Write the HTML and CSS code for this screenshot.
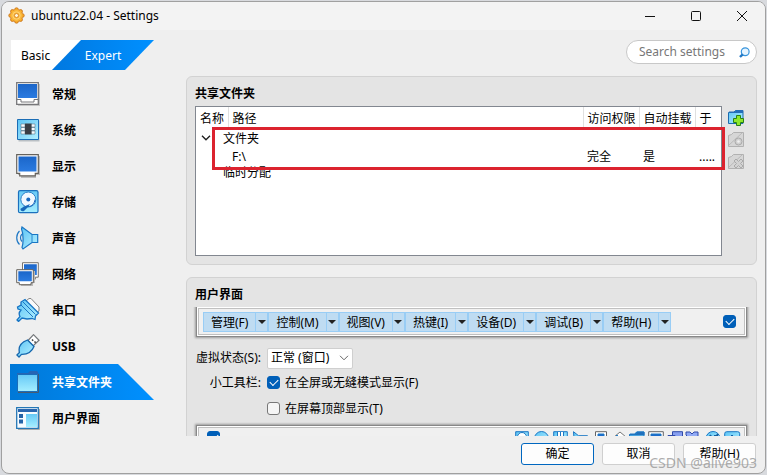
FILE: index.html
```html
<!DOCTYPE html>
<html lang="zh-CN">
<head>
  <meta charset="UTF-8">
  <meta name="viewport" content="width=device-width, initial-scale=1.0">
  <title>ubuntu22.04 - Settings</title>
  <link rel="stylesheet" href="styles.css">
</head>
<body>
  <svg class="defs" width="0" height="0" aria-hidden="true">
    <defs>
      <linearGradient id="screen" x1="0" y1="0" x2="0" y2="1"><stop offset="0" stop-color="#1b66c9"/><stop offset="1" stop-color="#2b7be0"/></linearGradient>
      <linearGradient id="sky" x1="0" y1="0" x2="1" y2="1"><stop offset="0" stop-color="#5cc4f5"/><stop offset="1" stop-color="#b5f0ff"/></linearGradient>
      <linearGradient id="ice" x1="0" y1="0" x2="0" y2="1"><stop offset="0" stop-color="#66c9f6"/><stop offset="1" stop-color="#a5eeff"/></linearGradient>
    </defs>
  </svg>

  <div class="window">
    <header class="titlebar">
      <svg class="gear" width="17" height="17" viewBox="0 0 17 17">
        <g fill="#f7a828" stroke="#c8741a" stroke-width=".8">
          <circle cx="8.5" cy="2.8" r="2"/><circle cx="12.5" cy="4.5" r="2"/><circle cx="14.2" cy="8.5" r="2"/><circle cx="12.5" cy="12.5" r="2"/>
          <circle cx="8.5" cy="14.2" r="2"/><circle cx="4.5" cy="12.5" r="2"/><circle cx="2.8" cy="8.5" r="2"/><circle cx="4.5" cy="4.5" r="2"/>
        </g>
        <circle cx="8.5" cy="8.5" r="5.7" fill="#fbb93c"/>
        <circle cx="8.5" cy="8.5" r="3.7" fill="none" stroke="#fdd377" stroke-width="1"/>
        <circle cx="8.5" cy="8.5" r="2" fill="#fff6dd" stroke="#d98520" stroke-width=".9"/>
      </svg>
      <h1>ubuntu22.04 - Settings</h1>
      <div class="window-buttons">
        <button aria-label="Minimize"><svg width="12" height="12" viewBox="0 0 12 12"><path d="M1 6.5h10"/></svg></button>
        <button aria-label="Maximize"><svg width="12" height="12" viewBox="0 0 12 12"><rect x="1.5" y="1.5" width="9" height="9" rx="1"/></svg></button>
        <button aria-label="Close"><svg width="12" height="12" viewBox="0 0 12 12"><path d="M1 1l10 10M11 1L1 11"/></svg></button>
      </div>
    </header>

    <div class="main">
      <aside class="sidebar">
        <div class="modes">
          <button class="mode basic">Basic</button>
          <button class="mode expert">Expert</button>
        </div>
        <nav>
          <a href="#general">
            <svg viewBox="0 0 24 24"><path d="M2 2h22v22H2z" fill="#c4c4c4"/><path d="M.7.7h21.6v21.6H.7z" fill="#fff" stroke="#77777a" stroke-width="1.3"/><path d="M2 2h19v14H2z" fill="url(#screen)"/><path d="M1 17.5h4v2.5h13v-2.5h4" fill="none" stroke="#77777a"/></svg>
            常规</a>
          <a href="#system">
            <svg viewBox="0 0 24 24"><path d="M2.5 2.5h21v21h-21z" fill="#b9bfc4"/><path d="M1.5 1.5h21v20h-21z" fill="url(#sky)" stroke="#1b6db5"/><path d="M5 6h4v3H5zM5 9.500h4v3H5zM5 13h4v3H5zM15 6h4v3h-4zM15 9.500h4v3h-4zM15 13h4v3h-4z" fill="#f6fbff" stroke="#4f6070" stroke-width=".5"/><path d="M9 5.500h6.500v11H9z" fill="#3a3e45"/></svg>
            系统</a>
          <a href="#display">
            <svg viewBox="0 0 24 24"><path d="M2 2h22v19h-4v3H5v-3H2z" fill="#bcbcbc"/><path d="M.7.7h21.600v18.600h-3v2.500H3.700v-2.500h-3z" fill="#fff" stroke="#66625c" stroke-width="1.200"/><path d="M2.500 2.500h18v15h-18z" fill="url(#screen)"/></svg>
            显示</a>
          <a href="#storage">
            <svg viewBox="0 0 24 24"><rect x="2.500" y=".7" width="19.500" height="22" rx="1.500" fill="url(#ice)" stroke="#1b70bd" stroke-width="1.200"/><circle cx="12.300" cy="9.500" r="7.500" fill="#f1f8ff" stroke="#2b7fc9"/><circle cx="12.300" cy="9.500" r="2" fill="#1868c0"/><path d="M14 14l-2 3-4 4c-2 .8-4-.2-3.500-2.200L8 16.500z" fill="#1767ba"/><path d="M12 16.500c4 0 6.500-3 7-7" fill="none" stroke="#1767ba"/></svg>
            存储</a>
          <a href="#audio">
            <svg viewBox="0 0 24 24"><path d="M3.500 5C-.2 8.500-.2 15 3.500 18.500M6 8c-2 2-2 5.500 0 7.500" fill="none" stroke="#2179c5" stroke-width="1.200"/><path d="M6 1l10 7.500h5.700v8H16L7 23l-1-1.500c1.500-4 1.500-14-.5-18.500z" fill="url(#sky)" stroke="#1976c4" stroke-width="1.200"/><path d="M16 8.500v8" stroke="#2a88cf"/></svg>
            声音</a>
          <a href="#network">
            <svg viewBox="0 0 24 24"><path d="M6.500.7H22.300v14.500h-3v2H8v-2H6.500z" fill="#fff" stroke="#77736e"/><path d="M8 2.300h12.800V13H8z" fill="url(#screen)"/><path d="M2 9h17v12h-2v3H5v-3H2z" fill="#b9b9b9"/><path d="M.7 7.700h16.600v13h-2.300v2H3.300v-2H.7z" fill="#fff" stroke="#66625c"/><path d="M2.300 9.300h13.500v10H2.300z" fill="url(#screen)"/></svg>
            网络</a>
          <a href="#serial">
            <svg viewBox="0 0 24 24"><path d="M10 3l3-2.500h2L23 9v4l-3 2z" fill="#fafafa" stroke="#858585"/><path d="M5 12l-3-1-.5-2L5 7V4l4-2.500L22.500 15l-3 3-.5 3.500-3-1-5 .5-5-1-3.500 3.500L1 22l3-3.500C2.500 16 3 14 5 12z" fill="url(#sky)" stroke="#1674c4" stroke-width="1.300"/><path d="M7 4l12.500 12.500M5 7l12 12" stroke="#1d76c3" fill="none"/></svg>
            串口</a>
          <a href="#usb">
            <svg viewBox="0 0 24 24"><path d="M12 6.500L17.500.7 23 6.300 17 12z" fill="#fff" stroke="#74777a" stroke-width="1.200"/><path d="M16 5.500l1.200 1.200M18.500 7.500l1.200 1.200" stroke="#444" stroke-width="1.600"/><path d="M11.500 6L18 12.500c-2 5-6 8-12.500 7.800L3 23 .9 21l2.500-2.500C2 12 6 8 11.500 6z" fill="url(#sky)" stroke="#1769af" stroke-width="1.300"/></svg>
            USB</a>
          <a href="#shared" class="selected">
            <svg viewBox="0 0 24 24"><path d="M1 3h11l2-2h7l1.500 2v19H1z" fill="#2765b4"/><path d="M1.500 4.500h20v17h-20z" fill="url(#ice)" stroke="#1c6db8"/><path d="M22.500 4v18.500H2" fill="none" stroke="#475b71"/></svg>
            共享文件夹</a>
          <a href="#interface">
            <svg viewBox="0 0 24 24"><path d="M.7 1.700h21.600v20.600H.7z" fill="#f6fbff" stroke="#2476b5" stroke-width="1.300"/><path d="M2 3h19v3H2z" fill="#2865ae"/><path d="M3 8h4v4H3zM3 13.500h4v4H3z" fill="#2463a7"/><path d="M10 8h11v13H10z" fill="url(#ice)"/><path d="M23.500 3v20.500H2" fill="none" stroke="#aaa"/></svg>
            用户界面</a>
        </nav>
      </aside>

      <section class="content">
        <div class="search">
          <input type="text" placeholder="Search settings" aria-label="Search settings">
          <svg width="11" height="11" viewBox="0 0 11 11"><circle cx="6.200" cy="4.700" r="3.900" fill="#e6f4ff" stroke="#3794dc" stroke-width="1.200"/><path d="M3.700 7.300L1 10" stroke="#2277c4" stroke-width="2.400"/></svg>
        </div>

        <div class="panels">
          <section class="panel">
            <h2>共享文件夹</h2>
            <div class="shared">
              <div class="folder-list">
                <table>
                  <colgroup><col class="c-name"><col><col class="c-access"><col class="c-mount"><col class="c-at"></colgroup>
                  <thead>
                    <tr><th>名称</th><th>路径</th><th>访问权限</th><th>自动挂载</th><th>于</th></tr>
                  </thead>
                  <tbody>
                    <tr><td colspan="5" class="group"><svg width="10" height="6" viewBox="0 0 10 6"><path d="M1 .8l4 4 4-4" fill="none" stroke="#222" stroke-width="1.400"/></svg>文件夹</td></tr>
                    <tr><td></td><td>F:\</td><td>完全</td><td>是</td><td>.....</td></tr>
                    <tr><td colspan="5" class="group leaf">临时分配</td></tr>
                  </tbody>
                </table>
                <div class="highlight"></div>
              </div>
              <div class="tools">
                <button aria-label="添加共享文件夹"><svg width="17" height="17" viewBox="0 0 17 17"><path d="M.5 3.500h5l2-2h7.500v13H.5z" fill="url(#sky)" stroke="#1b6caf"/><path d="M1 2.500h6l1-1.500h7v3H1z" fill="#236dba"/><path d="M8.500 6.500h4v3h3v4h-3v3h-4v-3h-3v-4h3z" fill="#8de82c" stroke="#298015"/></svg></button>
                <button aria-label="编辑共享文件夹" disabled><svg width="17" height="17" viewBox="0 0 17 17"><path d="M.5 4.500l3-1 2-2h10v14H.5z" fill="#d6d6d6" stroke="#b1b1b1"/><path d="M1 14L14 2" stroke="#bababa"/><circle cx="10.500" cy="10.500" r="3.500" fill="#d0d0d0" stroke="#aaa"/><circle cx="10.500" cy="10.500" r="1.300" fill="#f0f0f0"/></svg></button>
                <button aria-label="删除共享文件夹" disabled><svg width="17" height="17" viewBox="0 0 17 17"><path d="M.5 4.500l3-1 2-2h10v14H.5z" fill="#d6d6d6" stroke="#b1b1b1"/><path d="M1 14L14 2" stroke="#bababa"/><path d="M6 8l2-2 2.500 2.500L13 6l2 2-2.500 2.500L15 13l-2 2-2.500-2.500L8 15l-2-2 2.500-2.500z" fill="#d2d2d2" stroke="#aaa"/></svg></button>
              </div>
            </div>
          </section>

          <section class="panel">
            <h2>用户界面</h2>
            <div class="bar menu-bar">
              <button>管理(F)</button><button class="drop" aria-label="管理"></button>
              <button>控制(M)</button><button class="drop" aria-label="控制"></button>
              <button>视图(V)</button><button class="drop" aria-label="视图"></button>
              <button>热键(I)</button><button class="drop" aria-label="热键"></button>
              <button>设备(D)</button><button class="drop" aria-label="设备"></button>
              <button>调试(B)</button><button class="drop" aria-label="调试"></button>
              <button>帮助(H)</button><button class="drop" aria-label="帮助"></button>
              <input type="checkbox" aria-label="启用菜单栏" checked>
            </div>

            <div class="form">
              <label for="state">虚拟状态(S):</label>
              <div class="select">
                <select id="state"><option>正常 (窗口)</option></select>
                <svg width="10" height="6" viewBox="0 0 10 6"><path d="M1 .8l4 4 4-4" fill="none" stroke="#666"/></svg>
              </div>
              <span>小工具栏:</span>
              <label class="check"><input type="checkbox" checked>在全屏或无缝模式显示(F)</label>
              <label class="check second"><input type="checkbox">在屏幕顶部显示(T)</label>
            </div>

            <div class="bar status-bar">
              <input type="checkbox" aria-label="启用状态栏" checked>
              <svg width="226" height="15" viewBox="0 0 226 15" stroke="#1d77c3" fill="url(#sky)">
                <path d="M.7.7h12.600v13H.7z"/><circle cx="7" cy="6" r="4.500" fill="#fff"/>
                <circle cx="26.500" cy="7.500" r="7"/>
                <path d="M38.700.7h13.600v13H38.700z"/><path d="M42.500 1v5h6V1M45.500 1v4" fill="#fff"/>
                <path d="M58.500.7l5 4h9v8h-9l-4 2zM65.500 5v4M68.500 5v4M71.500 5v4"/>
                <path d="M80.500.7h11v13h-11z" fill="#fff" stroke="#666"/><path d="M83 3h6v8h-6z" fill="#1c6ccc"/>
                <path d="M99 6l6-5 6 5-5 6z" fill="#fff" stroke="#777"/><path d="M98 8l4-4 5 6-8 4z"/>
                <path d="M114.500 3.500h5l2-2.500h7.500v12h-14.500z"/><path d="M115 3h6l1-2h7v3h-14z" fill="#226fba"/>
                <path d="M133.700.7h14.600v11h-14.600z" fill="#fff" stroke="#666"/><path d="M136 3h10v7h-10z" fill="#1c6ccc"/>
                <path d="M157.500.7h10v11h-10zM153 4.500h7v8h-7z" fill="#879ff0" stroke="#314aa9"/>
                <path d="M171 1h4l2 2 2-2h4v4l-2 2 2 6h-11l1-7-2-2z" fill="#91aaf5" stroke="#314aa9"/>
                <circle cx="198" cy="7.500" r="7"/><path d="M196 4l-4 5M200 4v7M203 3l-4 6" stroke="#155e9f" stroke-width="2"/>
                <rect x="209.700" y=".7" width="15" height="13" rx="2"/><path d="M217 4v8M213 7l4 5 4-5" stroke="#1461a9" stroke-width="2" fill="none"/>
              </svg>
            </div>
          </section>
        </div>
      </section>
    </div>

    <footer>
      <button class="primary">确定</button>
      <button>取消</button>
      <button>帮助(H)</button>
      <span class="watermark">CSDN @alive903</span>
    </footer>
  </div>
</body>
</html>
```

FILE: styles.css
```css
* {
  box-sizing: border-box;
}

body {
  height: 100vh;
  margin: 0;
  padding: 1px;
  background: #d8dade;
  overflow: hidden;
  font-family: "Noto Sans", "Noto Sans CJK SC", sans-serif;
  font-size: 12px;
  line-height: 18px;
  color: #000;
}

button, input, select {
  font: inherit;
  color: inherit;
  margin: 0;
}

button {
  padding: 0;
  border: none;
  background: none;
}

svg {
  display: block;
  flex: none;
}

.defs {
  position: absolute;
}

.window {
  display: flex;
  flex-direction: column;
  height: 100%;
  border: 1px solid #a0a0a0;
  border-radius: 8px;
  background: #efefef;
  overflow: hidden;
}

/* title bar */
.titlebar {
  display: flex;
  align-items: center;
  height: 28px;
  padding-left: 6px;
  background: #f3f3f3;
}

.gear {
  margin-bottom: 2px;
}

.titlebar h1 {
  flex: 1;
  margin: 0 0 0 6px;
  font-size: 12px;
  font-weight: normal;
}

.window-buttons {
  display: flex;
}

.window-buttons button {
  display: grid;
  place-items: center;
  width: 46px;
  height: 28px;
}

.window-buttons path,
.window-buttons rect {
  fill: none;
  stroke: #111;
}

.main {
  display: flex;
  flex: 1;
  min-height: 0;
  padding: 10px 8px 0;
}

/* sidebar */
.sidebar {
  width: 176px;
  flex: none;
}

.modes {
  display: flex;
  height: 30px;
  margin-bottom: 6px;
}

.mode {
  height: 30px;
  padding-top: 2px;
}

.basic {
  width: 72px;
  padding-left: 11px;
  text-align: left;
  background: #fff;
  clip-path: polygon(1px 0, 100% 0, 42px 100%, 1px 100%);
}

.expert {
  width: 102px;
  margin-left: -30px;
  color: #fff;
  background: linear-gradient(90deg, #0078e0, #0090ff);
  clip-path: polygon(29px 0, 100% 0, 73px 100%, 0 100%);
}

nav a {
  display: flex;
  align-items: center;
  gap: 12px;
  width: 144px;
  height: 36px;
  padding: 2px 0 0 6px;
  font-weight: bold;
  color: #000;
  text-decoration: none;
}

nav svg {
  width: 24px;
  height: 24px;
  margin-bottom: 2px;
}

nav .selected {
  color: #fff;
  background: linear-gradient(90deg, #0078d7, #0090ff);
  clip-path: polygon(0 0, 108px 0, 100% 100%, 0 100%);
}

/* right side */
.content {
  display: flex;
  flex: 1;
  flex-direction: column;
  min-width: 0;
}

.search {
  display: flex;
  align-items: center;
  align-self: flex-end;
  width: 131px;
  height: 24px;
  margin-bottom: 12px;
  padding: 0 6px 0 12px;
  border: 1px solid #c8c8c8;
  border-radius: 12px;
  background: #fff;
}

.search input {
  flex: 1;
  min-width: 0;
  padding: 0;
  border: none;
  outline: none;
  background: none;
}

.search input::placeholder {
  color: #777;
}

.panels {
  display: flex;
  flex: 1;
  flex-direction: column;
  gap: 12px;
  min-height: 0;
  overflow: hidden;
}

.panel {
  flex: none;
  padding: 8px;
  border: 1px solid #d2d2d2;
  border-radius: 6px;
  background: #e4e4e4;
}

.panel h2 {
  margin: 0 0 3px;
  font-size: 12px;
  font-weight: bold;
}

.shared {
  display: flex;
  gap: 6px;
}

.folder-list {
  position: relative;
  flex: 1;
  height: 150px;
  border: 1px solid #828790;
  background: #fff;
}

table {
  width: 100%;
  table-layout: fixed;
  border-collapse: collapse;
}

.c-name { width: 32px; }
.c-access { width: 56px; }
.c-mount { width: 56px; }
.c-at { width: 26px; }

th, td {
  height: 18px;
  padding: 0 0 0 4px;
  font-weight: normal;
  line-height: 17px;
  text-align: left;
  white-space: nowrap;
}

th {
  height: 22px;
  border-right: 1px solid #e0e0e0;
}

th:last-child {
  border-right: none;
}

.group svg {
  display: inline-block;
  margin: 0 12px 2px 1px;
}

.group.leaf {
  height: 16px;
  padding-left: 27px;
  line-height: 16px;
}

/* red frame around the mounted folder */
.highlight {
  position: absolute;
  top: 20px;
  left: 16px;
  right: -4px;
  height: 43px;
  border: 3px solid #dc232f;
}

.tools {
  display: flex;
  flex-direction: column;
  gap: 5px;
  width: 20px;
  padding-top: 3px;
}

.bar {
  display: flex;
  align-items: center;
  margin: 0 2px;
  border: 1px solid #fff;
  outline: 1px solid #888;
  background: #f0f0f0;
  box-shadow: inset 0 0 0 1px #c0c0c0, 0 0 2px 2px #999;
}

.menu-bar {
  height: 29px;
  padding: 0 9px 0 5px;
  clip-path: inset(0 -4px -4px -4px);
}

.menu-bar button {
  height: 20px;
  padding: 1px 7px 0;
  border: 1px solid #99cdf5;
  border-right: none;
  background: #bfdcf2;
  line-height: 17px;
  white-space: nowrap;
}

.menu-bar .drop {
  display: grid;
  place-items: center;
  width: 13px;
  padding: 0;
  border-right: 1px solid #99cdf5;
}

.drop::after {
  content: "";
  border: 4px solid transparent;
  border-top-color: #222;
  border-bottom: none;
}

.menu-bar input {
  margin-left: auto;
}

input[type="checkbox"] {
  display: grid;
  place-items: center;
  flex: none;
  width: 13px;
  height: 13px;
  border: 1px solid #777;
  border-radius: 3px;
  background: #f5f5f5;
  appearance: none;
}

input[type="checkbox"]:checked {
  border-color: #005fb8;
  background: #005fb8;
}

input[type="checkbox"]:checked::after {
  content: "";
  width: 7px;
  height: 4px;
  margin-bottom: 2px;
  border: solid #fff;
  border-width: 0 0 1px 1px;
  transform: rotate(-45deg);
}

.form {
  display: grid;
  grid-template-columns: 66px 1fr;
  grid-template-rows: 22px 25px 25px;
  column-gap: 6px;
  row-gap: 1px;
  align-items: center;
  margin: 11px 0 5px;
}

.form > span,
.form > label:first-child {
  text-align: right;
  white-space: nowrap;
}

.select {
  display: grid;
  align-items: center;
  width: 86px;
}

.select select,
.select svg {
  grid-area: 1 / 1;
}

.select select {
  height: 21px;
  padding: 0 3px;
  border: 1px solid #cfcfcf;
  border-radius: 2px;
  background: #fff;
  line-height: 18px;
  appearance: none;
}

.select svg {
  justify-self: end;
  margin-right: 4px;
  pointer-events: none;
}

.check {
  display: flex;
  align-items: center;
  gap: 5px;
}

.check.second {
  grid-column: 2;
}

.status-bar {
  align-items: flex-start;
  justify-content: space-between;
  height: 29px;
  padding: 4px 4px 0 9px;
}

/* dialog buttons */
footer {
  position: relative;
  display: flex;
  justify-content: flex-end;
  gap: 8px;
  padding: 7px 9px 8px;
}

footer button {
  width: 73px;
  height: 22px;
  border: 1px solid #cfcfcf;
  border-radius: 3px;
  background: #fdfdfd;
}

footer .primary {
  border-color: #0067c0;
}

/* stamp laid over the dialog buttons */
.watermark {
  position: absolute;
  right: 8px;
  bottom: 1px;
  font-size: 14px;
  color: #999;
  opacity: 0.8;
}
```
